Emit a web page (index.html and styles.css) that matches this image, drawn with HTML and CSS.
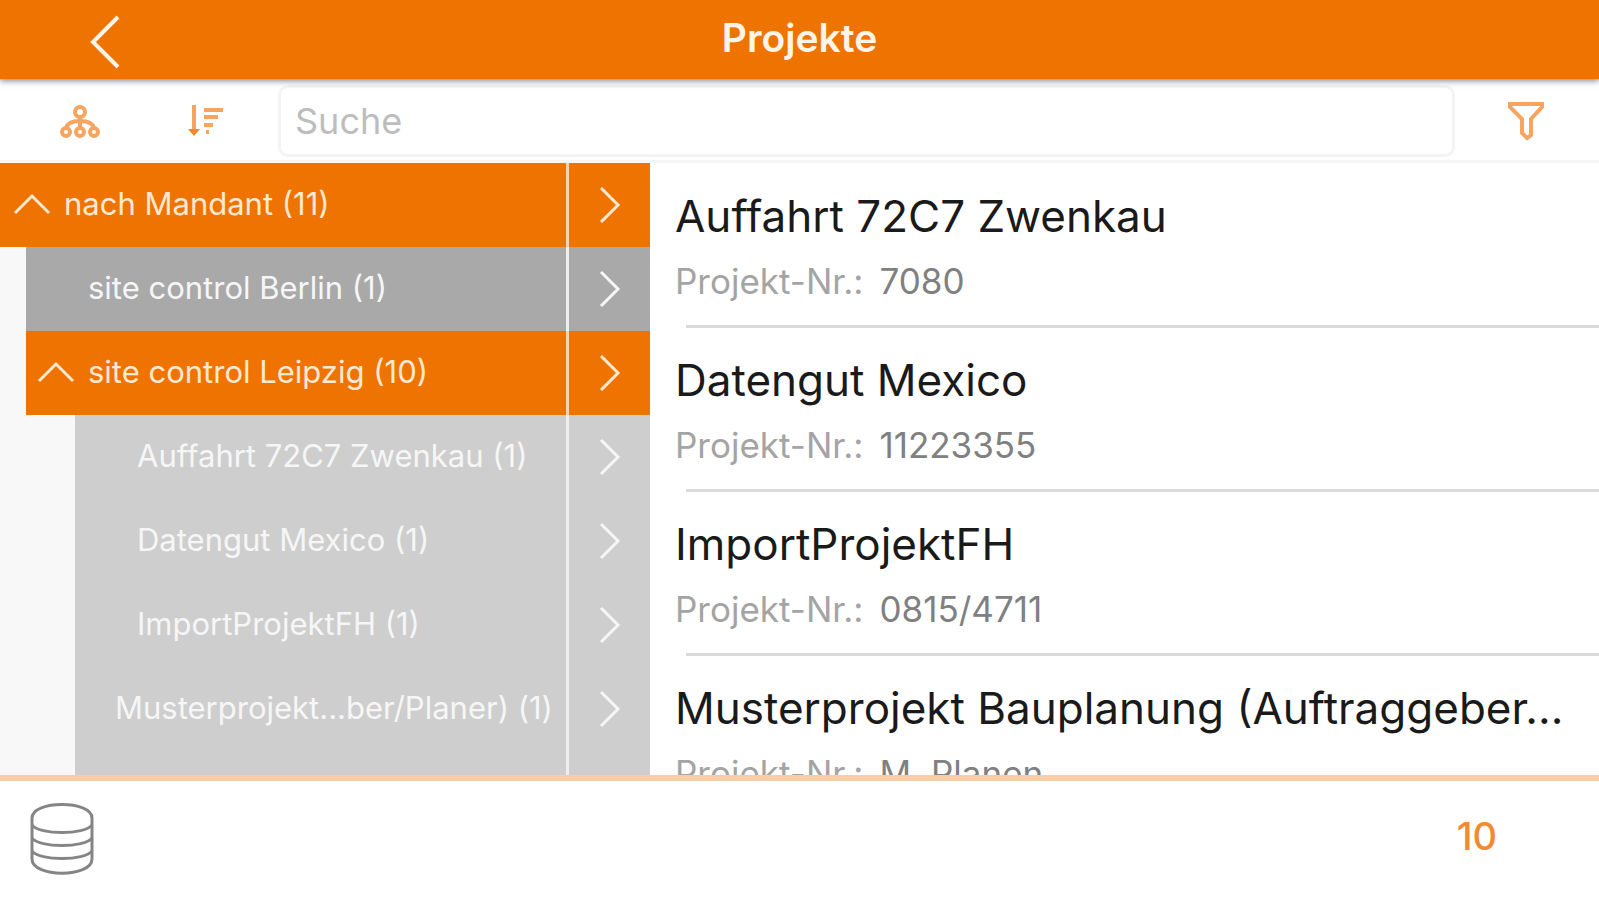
FILE: index.html
```html
<!DOCTYPE html>
<html lang="de">
<head>
    <meta charset="UTF-8">
    <meta name="viewport" content="width=device-width, initial-scale=1.0">
    <title>Projekte</title>
    <link rel="stylesheet" href="styles.css">
</head>
<body>
    <!-- Shared icons -->
    <svg class="sprite" aria-hidden="true">
        <symbol id="icon-right" viewBox="0 0 24 40">
            <path d="M3 3 L20 20 L3 37" />
        </symbol>
        <symbol id="icon-up" viewBox="0 0 40 24">
            <path d="M3 21 L20 4 L37 21" />
        </symbol>
    </svg>

    <header class="header">
        <button class="back" aria-label="Zurück">
            <svg width="32" height="54" viewBox="0 0 32 54"><path d="M30 2 L5 27 L30 52" /></svg>
        </button>
        <h1>Projekte</h1>
    </header>

    <div class="toolbar">
        <button class="tool" aria-label="Gruppieren">
            <svg width="40" height="34" viewBox="0 0 40 34">
                <circle cx="20" cy="8" r="5" />
                <circle cx="6" cy="28" r="4" />
                <circle cx="20" cy="28" r="4" />
                <circle cx="34" cy="28" r="4" />
                <path d="M20 13 V24 M6 24 Q8 17 20 17 Q32 17 34 24" />
            </svg>
        </button>
        <button class="tool" aria-label="Sortieren">
            <svg width="40" height="34" viewBox="0 0 40 34">
                <path d="M8 1 V28 M18 6 H37 M18 13 H32 M18 21 H27 M20 28 H23" />
                <path class="solid" d="M2 25 L8 32 L14 25 Z" />
            </svg>
        </button>
        <input type="text" class="search" placeholder="Suche" aria-label="Suche">
        <button class="tool filter" aria-label="Filtern">
            <svg width="38" height="40" viewBox="0 0 38 40">
                <path d="M3 3 H35 V6 L24 18 V34 L20 37 L15 32 V18 L3 6 Z" />
            </svg>
        </button>
    </div>

    <main class="content">
        <nav class="tree">
            <div class="row open">
                <button class="label"><svg class="up"><use href="#icon-up" /></svg>nach Mandant (11)</button>
                <button class="go" aria-label="Öffnen"><svg class="right"><use href="#icon-right" /></svg></button>
            </div>
            <div class="row level-1">
                <button class="label">site control Berlin (1)</button>
                <button class="go" aria-label="Öffnen"><svg class="right"><use href="#icon-right" /></svg></button>
            </div>
            <div class="row level-1 open">
                <button class="label"><svg class="up"><use href="#icon-up" /></svg>site control Leipzig (10)</button>
                <button class="go" aria-label="Öffnen"><svg class="right"><use href="#icon-right" /></svg></button>
            </div>
            <div class="row level-2">
                <button class="label">Auffahrt 72C7 Zwenkau (1)</button>
                <button class="go" aria-label="Öffnen"><svg class="right"><use href="#icon-right" /></svg></button>
            </div>
            <div class="row level-2">
                <button class="label">Datengut Mexico (1)</button>
                <button class="go" aria-label="Öffnen"><svg class="right"><use href="#icon-right" /></svg></button>
            </div>
            <div class="row level-2">
                <button class="label">ImportProjektFH (1)</button>
                <button class="go" aria-label="Öffnen"><svg class="right"><use href="#icon-right" /></svg></button>
            </div>
            <div class="row level-2">
                <button class="label long">Musterprojekt...ber/Planer) (1)</button>
                <button class="go" aria-label="Öffnen"><svg class="right"><use href="#icon-right" /></svg></button>
            </div>
            <div class="row level-2">
                <button class="label" aria-label="Weiteres Projekt"></button>
                <button class="go" aria-label="Öffnen"><svg class="right"><use href="#icon-right" /></svg></button>
            </div>
        </nav>

        <section class="projects">
            <article class="project">
                <h2>Auffahrt 72C7 Zwenkau</h2>
                <p>Projekt-Nr.: <span>7080</span></p>
            </article>
            <article class="project">
                <h2>Datengut Mexico</h2>
                <p>Projekt-Nr.: <span>11223355</span></p>
            </article>
            <article class="project">
                <h2>ImportProjektFH</h2>
                <p>Projekt-Nr.: <span>0815/4711</span></p>
            </article>
            <article class="project">
                <h2>Musterprojekt Bauplanung (Auftraggeber...</h2>
                <p>Projekt-Nr.: <span>M. Planen</span></p>
            </article>
        </section>
    </main>

    <footer class="footer">
        <button class="database" aria-label="Datenbank">
            <svg width="66" height="74" viewBox="0 0 66 74">
                <path d="M3 16 C3 -2 63 -2 63 16 V57 C63 76 3 76 3 57 Z" />
                <path d="M3 23 C10 33 56 33 63 23 M3 36 C10 46 56 46 63 36 M3 49 C10 59 56 59 63 49" />
            </svg>
        </button>
        <span class="count">10</span>
    </footer>
</body>
</html>
```
FILE: styles.css
```css
* {
    box-sizing: border-box;
}

body {
    display: flex;
    flex-direction: column;
    height: 100vh;
    margin: 0;
    overflow: hidden;
    background: white;
    font-family: Inter, "Liberation Sans", sans-serif;
}

button {
    padding: 0;
    border: none;
    background: none;
    color: inherit;
    font: inherit;
    cursor: pointer;
}

svg {
    display: block;
    fill: none;
    stroke: currentColor;
    stroke-width: 3px;
}

h1, h2, p {
    margin: 0;
}

.sprite {
    position: absolute;
    width: 0;
    height: 0;
}

/* Header */
.header {
    display: grid;
    grid-template-columns: 1fr auto 1fr;
    align-items: center;
    flex: none;
    height: 79px;
    padding: 0 88px;
    background: #ef7300;
    color: #fff4e8;
    box-shadow: 0 2px 6px rgba(0, 20, 50, 0.5);
    z-index: 1;
}

.header h1 {
    padding-bottom: 3px;
    font-size: 39px;
    font-weight: 600;
    line-height: 76px;
}

.back {
    justify-self: start;
    padding-top: 4px;
}

.back svg {
    stroke-width: 4px;
}

/* Toolbar */
.toolbar {
    display: flex;
    align-items: center;
    flex: none;
    height: 84px;
    padding: 2px 54px 0 60px;
    border-bottom: 3px solid #f6f6f6;
    color: #f5a560;
}

.tool {
    flex: none;
    margin-right: 86px;
}

.tool svg {
    stroke-width: 4px;
}

.tool .solid {
    fill: #f08a30;
    stroke: none;
}

.search {
    flex: 1;
    min-width: 0;
    height: 72px;
    margin-left: -34px;
    padding: 0 14px;
    border: 3px solid #f4f4f4;
    border-radius: 10px;
    background: white;
    font-family: inherit;
    font-size: 36px;
    color: #444;
}

.search::placeholder {
    color: #bdbdbd;
}

.filter {
    margin: 0 0 0 52px;
}

/* Tree and list side by side */
.content {
    display: flex;
    flex: 1;
    min-height: 0;
    overflow: hidden;
}

.tree {
    flex: none;
    width: 650px;
    background: #f8f8f8;
    color: #f6f6f6;
    font-size: 31px;
}

.row {
    display: flex;
    height: 84px;
    background: #cecece;
}

.level-1 {
    margin-left: 26px;
    background: #a9a9a9;
}

.level-2 {
    margin-left: 75px;
}

.open {
    background: #ef7300;
    color: #ffe9d2;
}

.label {
    display: flex;
    align-items: center;
    flex: 1;
    padding: 0 0 3px 62px;
    text-align: left;
    white-space: nowrap;
}

.open .label {
    padding-left: 12px;
}

.level-1.open .label {
    padding-left: 10px;
}

.label.long {
    padding-left: 40px;
}

.up {
    width: 40px;
    height: 24px;
    margin-right: 12px;
}

.go {
    display: flex;
    align-items: center;
    justify-content: center;
    width: 84px;
    border-left: 3px solid #efefef;
}

.open .go {
    border-color: #fbd3ac;
}

.right {
    width: 24px;
    height: 40px;
}

.projects {
    flex: 1;
    min-width: 0;
    padding-left: 25px;
}

.project {
    height: 164px;
    padding-top: 25px;
}

.project + .project::before {
    content: "";
    display: block;
    height: 3px;
    margin: -27px 0 24px 11px;
    background: #dadada;
}

.project h2 {
    font-size: 44px;
    font-weight: 400;
    line-height: 56px;
    color: #1a1a1a;
    white-space: nowrap;
}

.project p {
    display: flex;
    gap: 16px;
    margin-top: 16px;
    font-size: 35px;
    line-height: 42px;
    color: #a4a4a4;
}

.project span {
    color: #808080;
}

/* Footer */
.footer {
    display: flex;
    align-items: center;
    justify-content: space-between;
    flex: none;
    height: 125px;
    padding: 0 102px 4px 29px;
    border-top: 6px solid #f9cda6;
}

.database {
    color: #858585;
}

.count {
    padding-bottom: 6px;
    font-size: 38px;
    font-weight: 500;
    color: #f18a30;
}
```
